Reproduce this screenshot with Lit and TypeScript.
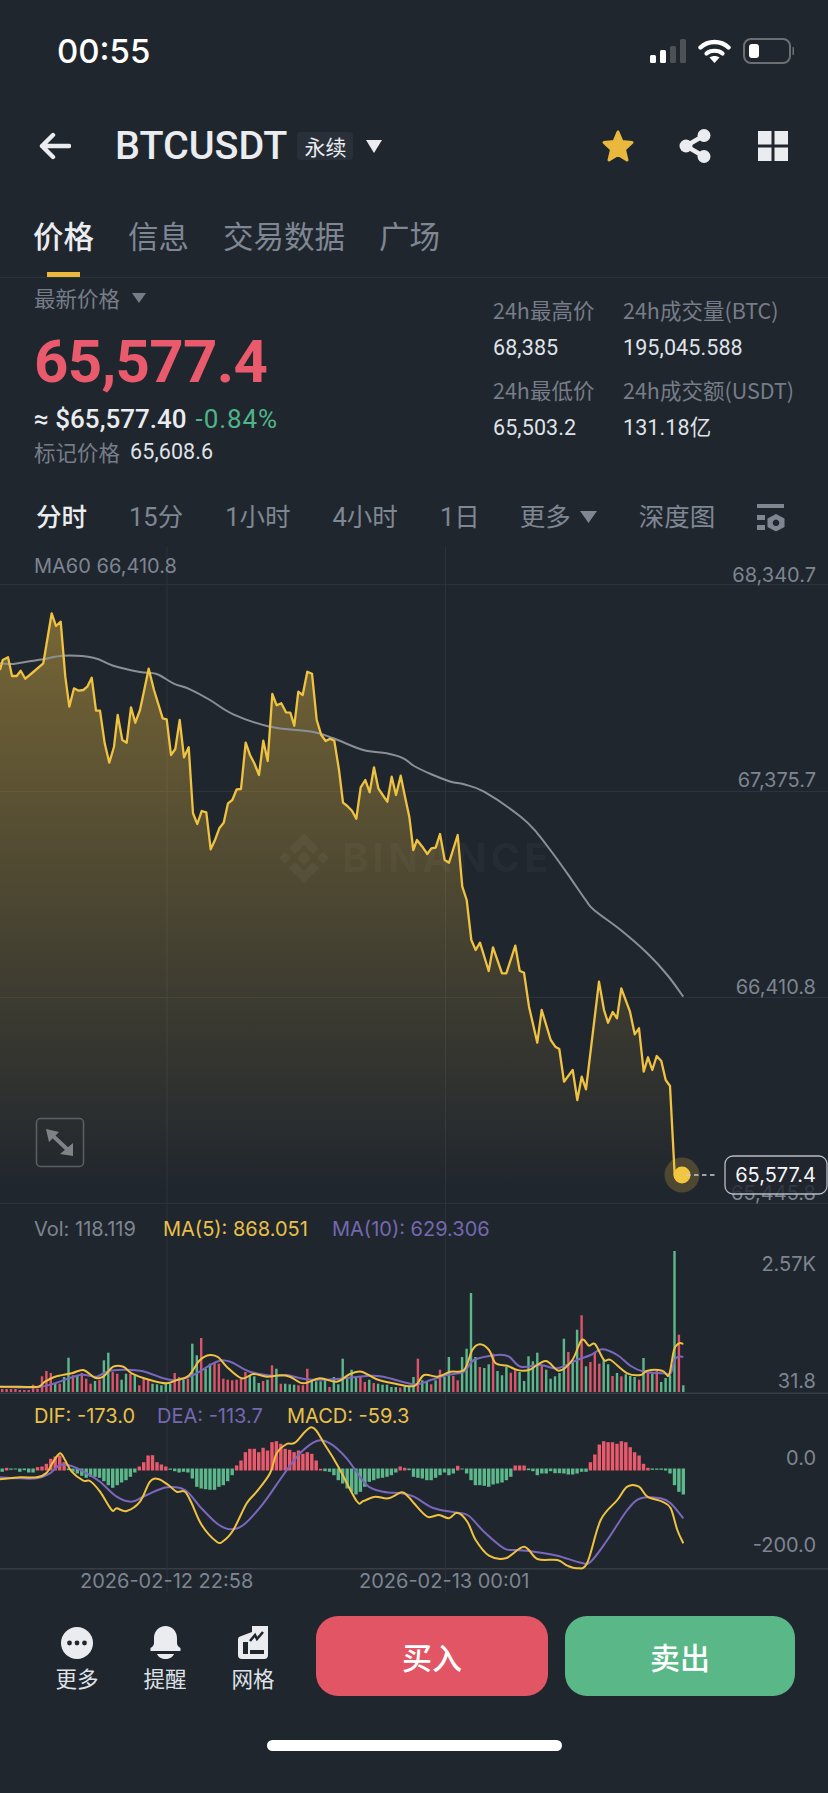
import { LitElement, html, css, svg } from "lit";
import { customElement } from "lit/decorators.js";

type P = [number, number];
const z = (pts: number[], ox: number, oy: number): P[] => {
  const out: P[] = [];
  for (let i = 0; i < pts.length; i += 2) out.push([ox + pts[i] / 3, oy + pts[i + 1] / 3]);
  return out;
};
const d = (p: P[]) => "M" + p.map((q) => q[0].toFixed(1) + " " + q[1].toFixed(1)).join("L");
const f = (n: number) => n.toFixed(1);
const smooth = (p: P[]) => {
  let s = `M${f(p[0][0])} ${f(p[0][1])}`;
  for (let i = 0; i < p.length - 1; i++) {
    const a = p[Math.max(i - 1, 0)], b = p[i], c = p[i + 1], e = p[Math.min(i + 2, p.length - 1)];
    s += `C${f(b[0] + (c[0] - a[0]) / 6)} ${f(b[1] + (c[1] - a[1]) / 6)} ${f(c[0] - (e[0] - b[0]) / 6)} ${f(c[1] - (e[1] - b[1]) / 6)} ${f(c[0])} ${f(c[1])}`;
  }
  return s;
};

const price: P[] = [
  ...z([0,360,8,330,24,322,36,378,50,378,62,362,76,386,100,366,130,340,155,190,168,228,182,215,196,380,208,470,222,415,236,422,250,420,262,410,275,383,288,482,300,482,314,580,328,638,342,590,353,495,367,570,380,578,393,472,406,518,420,480,446,356,462,420,488,505,500,508,513,615,526,597,539,510,552,622,566,592,579,790,592,822,605,783,619,787,632,898,645,870,658,835,671,818,684,760,697,750,710,718,723,717,737,578,750,615,763,640,777,675,790,572,803,633,817,432,830,466,844,460,858,487,871,488,883,527,895,425,908,435,922,365,936,371,950,510,964,555,977,573,990,566,1003,572,1017,660,1029,758,1042,768,1056,782,1069,806,1082,712,1096,690,1109,727,1122,652,1135,715,1148,735,1162,755,1175,680,1188,735,1202,677,1215,740,1228,800,1240,900], 0, 550),
  ...z([9,870,25,890,40,912,52,895,65,893,78,852,92,930,105,938,131,855,145,1010], 414, 550),
  ...z([158,0,172,120,185,150,198,128,224,213,237,142,264,220,277,220,304,137,317,212,330,218,345,320,370,428,383,330,410,420,424,440,436,447,450,545,476,510,490,600,503,530,516,568,555,245,570,330,582,368,596,336,609,355,622,265,648,335,662,403,675,385,689,515,702,472,715,510,728,468,742,483,755,540,768,558,782,825,805,825], 414, 900),
];
const ma60: P[] = [
  ...z([0,340,40,342,80,335,130,328,190,317,280,323,340,347,420,366,470,372,520,400,570,418,630,450,700,493,810,530,940,546,1000,565,1090,600,1160,610,1210,625,1242,648], 0, 550),
  ...z([50,672,110,695,150,703,210,725,320,800,370,850,420,915,470,985], 414, 550),
  ...z([515,0,540,30,620,90,700,160,760,225,808,290], 414, 900),
];
// positive = red, negative = green; value = height in 3x px
const vol0 = [9,9,9,9,6,6,6,22,10,47,63,57,-27,25,-45,-103,50,-50,57,40,25,-33,37,-95,-118,60,55,-37,-55,55,-50,20,40,37,-25,-23,-20,-25,-25,57,45,-37,40,-145,-110,162,-70,-85,90,85,40,37,35,37,40,60,-50,-47,-27,33,-37,80,-70,25,-25,-23,-22,20,20,70,-35,-32,-32,-37,15,-45,-23,-100,-40,-67,-45,45,30,-37,27,-25,-22,-22,-15,-15,13,-17,-15,-45];
const vol1 = [100,-35,-30,23,-35,67,-45,-105,48,35,-105,-130,-297,-105,75,-72,-83,115,-63,-50,-75,58,65,-60,-33,-107,-92,-118,80,-67,-40,-47,-57,-160,120,-95,-187,230,-77,90,120,85,-95,-83,48,-57,47,-53,-48,-45,37,-102,60,-55,63,-30,-42,-50,-423,172,-20];
const vols = [...vol0, ...vol1];
const macds = [-10,8,-4,-3,-10,-5,-12,-12,10,12,20,35,42,45,25,-5,-10,-15,-22,-28,-25,-25,-28,-38,-50,-58,-50,-42,-35,-25,-12,12,25,45,46,25,18,12,-4,-8,-12,-10,-12,-30,-55,-60,-62,-64,-64,-55,-50,-38,-20,15,30,55,65,65,55,68,60,85,88,80,65,62,55,60,50,55,50,30,5,-8,-10,-20,-35,-45,-60,-70,-78,-70,-55,-40,-35,-30,-28,-25,-20,-12,12,8,-5,-25,
  -28,-30,-35,-35,-28,-20,-12,-20,-15,14,-3,-15,-35,-50,-50,-52,-55,-48,-45,-42,-35,-25,15,15,15,-5,-8,-20,-15,-15,-8,-14,-14,-15,-18,-18,-15,-10,-10,25,48,78,88,85,85,80,88,85,70,55,45,20,8,-4,-4,-4,-6,-15,-50,-70,-78];
const barX = (i: number, n: number) => 683.3 - (n - 1 - i) * 4.423;

const volY: P[] = [
  ...z([0,860,60,860,115,860,135,845,165,830,215,820,250,810,285,833,310,830,340,800,370,800,395,820,450,840,500,850,530,840,565,828,600,780,630,765,655,772,680,800,725,835,760,822,800,830,840,826,870,830,910,850,960,835,1010,845,1050,822,1085,815,1130,838,1180,850,1242,858], 0, 1100),
  ...z([30,525,70,530,110,515,150,510,175,450,198,433,225,450,245,490,280,497,310,510,345,510,395,483,435,512,475,480,503,420,525,437,543,432,570,480,590,480,640,520,680,525,700,512,745,512,765,525,780,450,795,430,808,432], 414, 1200),
];
const volP: P[] = [
  ...z([0,860,110,862,170,848,240,825,290,830,330,812,420,812,490,835,530,840,580,825,650,785,690,785,750,815,820,828,860,825,920,838,1000,838,1100,828,1150,830,1242,853], 0, 1100),
  ...z([50,540,100,525,150,515,180,480,250,465,285,470,320,500,380,495,430,505,490,480,530,465,565,448,610,465,650,498,690,515,750,520,770,520,785,475,808,470], 414, 1200),
];
const difL: P[] = [
  ...z([0,268,60,262,110,262,140,248,160,215,180,190,195,210,215,245,250,272,270,273,300,305,335,360,350,355,380,363,420,335,450,275,475,267,505,285,530,305,555,305,575,340,605,405,650,455,670,453,700,420,740,340,770,305,810,250,830,190,860,162,885,158,935,112,975,165,1015,230,1070,333,1090,333,1125,320,1165,325,1205,307,1225,320,1242,340], 0, 1390),
  ...z([40,380,75,375,105,385,130,368,160,395,185,450,225,497,275,505,330,470,370,507,430,510,460,527,490,535,520,518,560,390,610,330,640,290,675,290,700,320,745,335,770,355,790,420,808,460], 414, 1390),
];
const deaL: P[] = [
  ...z([0,262,60,265,110,265,150,250,180,225,215,228,260,250,300,275,350,320,395,335,440,315,500,292,555,300,600,350,650,400,690,418,730,405,790,340,850,255,900,190,950,153,990,160,1040,205,1100,285,1150,305,1205,310,1242,320], 0, 1390),
  ...z([60,355,130,368,165,378,210,425,270,475,305,480,360,485,430,497,500,518,530,515,580,450,640,360,680,325,740,325,770,340,808,385], 414, 1390),
];

@customElement("app-root")
export class AppRoot extends LitElement {
  static styles = css`
    :host { display: block; width: 828px; height: 1793px; background: #20262e; color: #eaecef; overflow: hidden;
      font-family: Roboto, "Noto Sans CJK SC", sans-serif; }
    svg { display: block; }
    .status { height: 101px; box-sizing: border-box; padding: 0 34px 0 57px; display: flex; align-items: center; }
    .time { font: 500 33px/40px Inter, sans-serif; color: #fff; flex: 1; }
    .sys { display: flex; align-items: center; gap: 12px; }
    .nav { height: 90px; box-sizing: border-box; padding: 0 40px 0 39px; display: flex; align-items: center; }
    .pair { font: 500 39.5px/44px Roboto, sans-serif; margin-left: 44px; }
    .perp { margin-left: 10px; width: 56px; height: 28px; border-radius: 4px; background: #2a3039; display: flex; align-items: center; justify-content: center; font: 21px/28px "Noto Sans CJK SC", sans-serif; }
    .tri { margin-left: 12px; }
    .nav-r { margin-left: auto; display: flex; align-items: center; gap: 44px; }
    .nav-r .g { margin-left: 3px; }
    .tabs { display: flex; gap: 34px; padding: 23px 0 0 33px; height: 87px; box-sizing: border-box; border-bottom: 1px solid #2b3139; }
    .tab { display: flex; flex-direction: column; align-items: center; font: 30.5px/42px "Noto Sans CJK SC", sans-serif; color: #7f8793; }
    .tab.on { color: #eaecef; font-weight: 500; }
    .ink { width: 33px; height: 6px; background: #e9b83c; margin-top: 16px; }
    .summary { height: 212px; box-sizing: border-box; display: flex; justify-content: space-between; padding: 0 0 0 34px; }
    .lab { font: 21.5px/28px "Noto Sans CJK SC", Roboto, sans-serif; color: #767d88; }
    .latest { display: flex; align-items: center; gap: 12px; margin-top: 6px; height: 28px; }
    .last { font: 700 60px/70px Roboto, sans-serif; color: #e85a6c; margin-top: 15px; letter-spacing: -0.7px; }
    .approx { font: 500 26px/30px Roboto, sans-serif; margin-top: 7px; display: flex; gap: 9px; }
    .chg { color: #4fb488; font-weight: 400; letter-spacing: 0.9px; }
    .mark { display: flex; align-items: center; gap: 10px; margin-top: 4px; }
    .num { font: 21.5px/28px Roboto, "Noto Sans CJK SC", sans-serif; color: #dfe2e6; letter-spacing: 0.1px; }
    .stats { width: 335px; padding-top: 18px; box-sizing: border-box; display: grid; grid-template-columns: 130px 1fr; grid-auto-rows: 80px; align-content: start; }
    .stat .num { margin-top: 10px; }
    .ints { height: 54px; box-sizing: border-box; display: flex; align-items: center; padding-left: 36px; gap: 42px; font: 25.5px/32px Roboto, "Noto Sans CJK SC", sans-serif; color: #7f8793; }
    .ints .on { color: #eaecef; font-weight: 500; }
    .more { display: flex; align-items: center; gap: 9px; margin-left: -2px; }
    .chart { display: block; width: 828px; height: 1047px; margin-top: 1px; }
    .chart text { font-family: Inter, sans-serif; font-size: 20px; fill: #7d8591; }
    .chart .y { text-anchor: end; }
    .chart .ye { fill: #e9c04a; }
    .chart .pu { fill: #7568b0; }
    .chart .wm { font: 700 40px Inter, sans-serif; fill: rgba(255,255,255,.035); letter-spacing: 4px; }
    .bottom { height: 201px; display: flex; flex-direction: column; }
    .actions { display: flex; padding: 24px 33px 0 55px; height: 104px; box-sizing: border-box; }
    .tools { display: flex; gap: 44px; padding-top: 10px; margin-right: 41px; }
    .tool { width: 44px; display: flex; flex-direction: column; align-items: center; font: 21.5px/30px "Noto Sans CJK SC", sans-serif; color: #dfe2e6; white-space: nowrap; }
    .tool svg { margin-bottom: 3px; }
    .btn { height: 80px; border-radius: 22px; display: flex; align-items: center; justify-content: center; font: 500 30px/40px "Noto Sans CJK SC", sans-serif; color: #fff; }
    .buy { width: 232px; background: #e25565; margin-right: 17px; }
    .sell { width: 230px; background: #5ab787; }
    .home { width: 295px; height: 11px; border-radius: 6px; background: #fff; margin: 44px 0 0 267px; }
  `;

  private chart() {
    const rects = [] as unknown[];
    const n = vols.length;
    vols.forEach((v, i) => {
      const h = Math.abs(v) / 3;
      rects.push(svg`<rect x=${(barX(i, n) - 1.2).toFixed(1)} y=${(1392 - h).toFixed(1)} width="2.4" height=${h.toFixed(1)} fill=${v > 0 ? "#dc5468" : "#5cb88b"} />`);
    });
    const m = macds.length;
    macds.forEach((v, i) => {
      const h = Math.abs(v) / 3;
      const x = barX(i, m) - 1.7;
      const y = v > 0 ? 1470.5 - h : 1468.5;
      rects.push(svg`<rect x=${x.toFixed(1)} y=${y.toFixed(1)} width="3.4" height=${h.toFixed(1)} fill=${v > 0 ? "#e85a6c" : "#5cb88b"} />`);
    });
    const area = d(price) + "L682 1203L0 1203Z";
    const grid = "#2e333b";
    return svg`
      <defs>
        <linearGradient id="fill" gradientUnits="userSpaceOnUse" x1="0" y1="610" x2="0" y2="1190">
          <stop offset="0" stop-color="#f0c040" stop-opacity=".42" />
          <stop offset="1" stop-color="#f0c040" stop-opacity="0" />
        </linearGradient>
      </defs>
      <g fill=${grid}>
        <rect x="0" y="584" width="828" height="1" />
        <rect x="0" y="791" width="828" height="1" />
        <rect x="0" y="997" width="828" height="1" />
        <rect x="0" y="1203" width="828" height="1" />
        <rect x="0" y="1392.5" width="828" height="1.5" fill="#383d45" />
        <rect x="0" y="1568" width="828" height="1.5" fill="#383d45" />
        <rect x="0" y="1592" width="828" height="1" fill="#2b3139" />
        <rect x="166.5" y="547" width="1" height="1045" />
        <rect x="445" y="547" width="1" height="1045" />
      </g>
      <path d=${area} fill="url(#fill)" />
      <g fill="rgba(255,255,255,.04)" transform="translate(304 858)">
        <path d="M0-25L15-10L9-4L0-13L-9-4L-15-10Z" />
        <path d="M0 25L15 10L9 4L0 13L-9 4L-15 10Z" />
        <path d="M-25 0L-19-6L-13 0L-19 6Z" />
        <path d="M25 0L19-6L13 0L19 6Z" />
        <path d="M0-7L7 0L0 7L-7 0Z" />
      </g>
      <text class="wm" x="342" y="872">BINANCE</text>
      <path d=${smooth(ma60)} fill="none" stroke="#8b9096" stroke-width="2" stroke-linejoin="round" />
      <path d=${d(price)} fill="none" stroke="#efc242" stroke-width="2.3" stroke-linejoin="round" />

      <text x="34" y="573">MA60 66,410.8</text>
      <text class="y" x="816" y="582">68,340.7</text>
      <text class="y" x="816" y="787">67,375.7</text>
      <text class="y" x="816" y="994">66,410.8</text>
      <text class="y" x="816" y="1200">65,445.8</text>

      <circle cx="682" cy="1175" r="17.5" fill="#f0c040" fill-opacity=".22" />
      <circle cx="682" cy="1175" r="8.5" fill="#f3c63f" />
      <path d="M686 1175H716" stroke="#c9ccd0" stroke-width="1.5" stroke-dasharray="4.5 3.5" />
      <rect x="725" y="1156" width="102" height="38" rx="8" fill="#20262e" fill-opacity=".8" stroke="#b8bcc2" stroke-width="1.3" />
      <text class="y" x="816" y="1182" style="fill:#f4f5f6">65,577.4</text>

      <rect x="36.5" y="1118.5" width="47" height="48" rx="4" fill="none" stroke="#5c6168" stroke-width="1.5" />
      <path d="M46 1129l13 3-10 10zM73 1156l-13-2 13-11z" fill="#7f8388" />
      <path d="M52 1135l16 15" stroke="#7f8388" stroke-width="4" />

      <text x="34" y="1236">Vol: 118.119</text>
      <text class="ye" x="163" y="1236">MA(5): 868.051</text>
      <text class="pu" x="332" y="1236">MA(10): 629.306</text>
      <text class="y" x="816" y="1271">2.57K</text>
      <text class="y" x="816" y="1388">31.8</text>

      ${rects}
      <path d=${smooth(volP)} fill="none" stroke="#7a68bd" stroke-width="2" stroke-linejoin="round" />
      <path d=${smooth(volY)} fill="none" stroke="#efc242" stroke-width="2" stroke-linejoin="round" />

      <text class="ye" x="34" y="1423">DIF: -173.0</text>
      <text class="pu" x="157" y="1423">DEA: -113.7</text>
      <text class="ye" x="287" y="1423">MACD: -59.3</text>
      <text class="y" x="816" y="1465">0.0</text>
      <text class="y" x="816" y="1552">-200.0</text>

      <path d=${smooth(deaL)} fill="none" stroke="#7a68bd" stroke-width="2" stroke-linejoin="round" />
      <path d=${smooth(difL)} fill="none" stroke="#efc242" stroke-width="2" stroke-linejoin="round" />

      <text x="80" y="1588">2026-02-12 22:58</text>
      <text x="359" y="1588">2026-02-13 00:01</text>
    `;
  }

  render() {
    return html`
      <div class="status">
        <div class="time">00:55</div>
        <div class="sys">
          <svg width="36" height="24" viewBox="0 0 36 24" fill="#fff">
            <rect x="0" y="16" width="6" height="8" rx="1.5" />
            <rect x="10" y="11" width="6" height="13" rx="1.5" />
            <rect x="20" y="7" width="6" height="17" rx="1.5" fill="#4d5156" />
            <rect x="30" y="0" width="6" height="24" rx="1.5" fill="#4d5156" />
          </svg>
          <svg width="33" height="25" viewBox="0 0 33 25" fill="none" stroke="#fff" stroke-linecap="round">
            <path d="M2.5 9.5C10 2.2 23 2.2 30.5 9.5" stroke-width="4.4" />
            <path d="M8.5 15.5C12.5 11.8 20.5 11.8 24.5 15.5" stroke-width="4.2" />
            <path d="M16.5 25L11.5 19.5C14.5 17.5 18.5 17.5 21.5 19.5Z" fill="#fff" stroke="none" />
          </svg>
          <svg width="51" height="26" viewBox="0 0 51 26">
            <rect x="1" y="1" width="46" height="24" rx="7" fill="none" stroke="#6c7075" stroke-width="2" />
            <rect x="6" y="6" width="10" height="14" rx="3" fill="#fff" />
            <path d="M49.5 9a4 4 0 0 1 0 8z" fill="#6c7075" />
          </svg>
        </div>
      </div>

      <div class="nav">
        <svg width="32" height="28" viewBox="0 0 32 28" fill="none" stroke="#eaecef" stroke-width="4.4" stroke-linecap="round" stroke-linejoin="round"><path d="M3 14H30M14 3L3 14L14 25" /></svg>
        <div class="pair">BTCUSDT</div>
        <div class="perp">永续</div>
        <svg class="tri" width="18" height="14" viewBox="0 0 18 14"><path d="M1 1H17L9 14Z" fill="#eaecef" /></svg>
        <div class="nav-r">
          <svg width="34" height="34" viewBox="0 0 34 34"><path d="M17 3L21 12.5L31 13.5L23.5 20.5L26 31L17 25.5L8 31L10.5 20.5L3 13.5L13 12.5Z" fill="#e9b83c" stroke="#e9b83c" stroke-width="3" stroke-linejoin="round" /></svg>
          <svg width="32" height="34" viewBox="0 0 32 34" fill="#eaecef"><circle cx="7" cy="17" r="6.5" /><circle cx="25" cy="6.5" r="6.5" /><circle cx="25" cy="27.5" r="6.5" /><path d="M7 17L25 6.5M7 17L25 27.5" stroke="#eaecef" stroke-width="4.5" /></svg>
          <svg class="g" width="30" height="30" viewBox="0 0 30 30" fill="#eaecef"><rect width="13.5" height="13.5" /><rect x="16.5" width="13.5" height="13.5" /><rect y="16.5" width="13.5" height="13.5" /><rect x="16.5" y="16.5" width="13.5" height="13.5" /></svg>
        </div>
      </div>

      <div class="tabs">
        <div class="tab on">价格<div class="ink"></div></div>
        <div class="tab">信息</div>
        <div class="tab">交易数据</div>
        <div class="tab">广场</div>
      </div>

      <div class="summary">
        <div>
          <div class="latest"><span class="lab">最新价格</span><svg width="14" height="10" viewBox="0 0 14 10"><path d="M0 0H14L7 10Z" fill="#767d88" /></svg></div>
          <div class="last">65,577.4</div>
          <div class="approx"><span>≈ $65,577.40</span><span class="chg">-0.84%</span></div>
          <div class="mark"><span class="lab">标记价格</span><span class="num">65,608.6</span></div>
        </div>
        <div class="stats">
          <div class="stat"><div class="lab">24h最高价</div><div class="num">68,385</div></div>
          <div class="stat"><div class="lab">24h成交量(BTC)</div><div class="num">195,045.588</div></div>
          <div class="stat"><div class="lab">24h最低价</div><div class="num">65,503.2</div></div>
          <div class="stat"><div class="lab">24h成交额(USDT)</div><div class="num">131.18亿</div></div>
        </div>
      </div>

      <div class="ints">
        <span class="on">分时</span><span>15分</span><span>1小时</span><span>4小时</span><span>1日</span>
        <span class="more">更多<svg width="17" height="12" viewBox="0 0 17 12"><path d="M0 0H17L8.5 12Z" fill="#7f8793" /></svg></span>
        <span>深度图</span>
        <svg width="28" height="27" viewBox="0 0 28 27" fill="#7f8793"><rect x="0" y="0" width="27" height="4" /><rect x="0" y="11" width="8" height="5" /><rect x="0" y="21" width="8" height="5" /><path d="M19 10L27.5 14.5V23L19 27.5L10.5 23V14.5ZM19 15.5a3.3 3.3 0 1 0 .01 0Z" fill-rule="evenodd" /></svg>
      </div>

      <svg class="chart" viewBox="0 545 828 1047">${this.chart()}</svg>

      <div class="bottom">
        <div class="actions">
          <div class="tools">
            <div class="tool">
              <svg width="32" height="34" viewBox="0 0 32 34"><circle cx="16" cy="17" r="16" fill="#eaecef" /><circle cx="8.5" cy="17" r="2.4" fill="#20262e" /><circle cx="16" cy="17" r="2.4" fill="#20262e" /><circle cx="23.5" cy="17" r="2.4" fill="#20262e" /></svg>
              更多
            </div>
            <div class="tool">
              <svg width="31" height="34" viewBox="0 0 31 34" fill="#eaecef"><path d="M15.5 0C9 0 4 5 4 12V17Q4 20 .5 22V25H30.5V22Q27 20 27 17V12C27 5 22 0 15.5 0Z" /><path d="M7 28H24C23 31 19 33 15.5 33C12 33 8 31 7 28Z" /></svg>
              提醒
            </div>
            <div class="tool">
              <svg width="30" height="34" viewBox="0 0 30 34"><path d="M14 0H30V29Q30 33 26 33H4Q0 33 0 29V13Q0 11 2 10.5L14 6Z" fill="#eaecef" /><path d="M12 15L17 9L19 13L25 6" fill="none" stroke="#20262e" stroke-width="2.6" /><rect x="5" y="16" width="5" height="12" fill="#20262e" /><rect x="12" y="24" width="14" height="4" fill="#20262e" /></svg>
              网格
            </div>
          </div>
          <div class="btn buy">买入</div>
          <div class="btn sell">卖出</div>
        </div>
        <div class="home"></div>
      </div>
    `;
  }
}
